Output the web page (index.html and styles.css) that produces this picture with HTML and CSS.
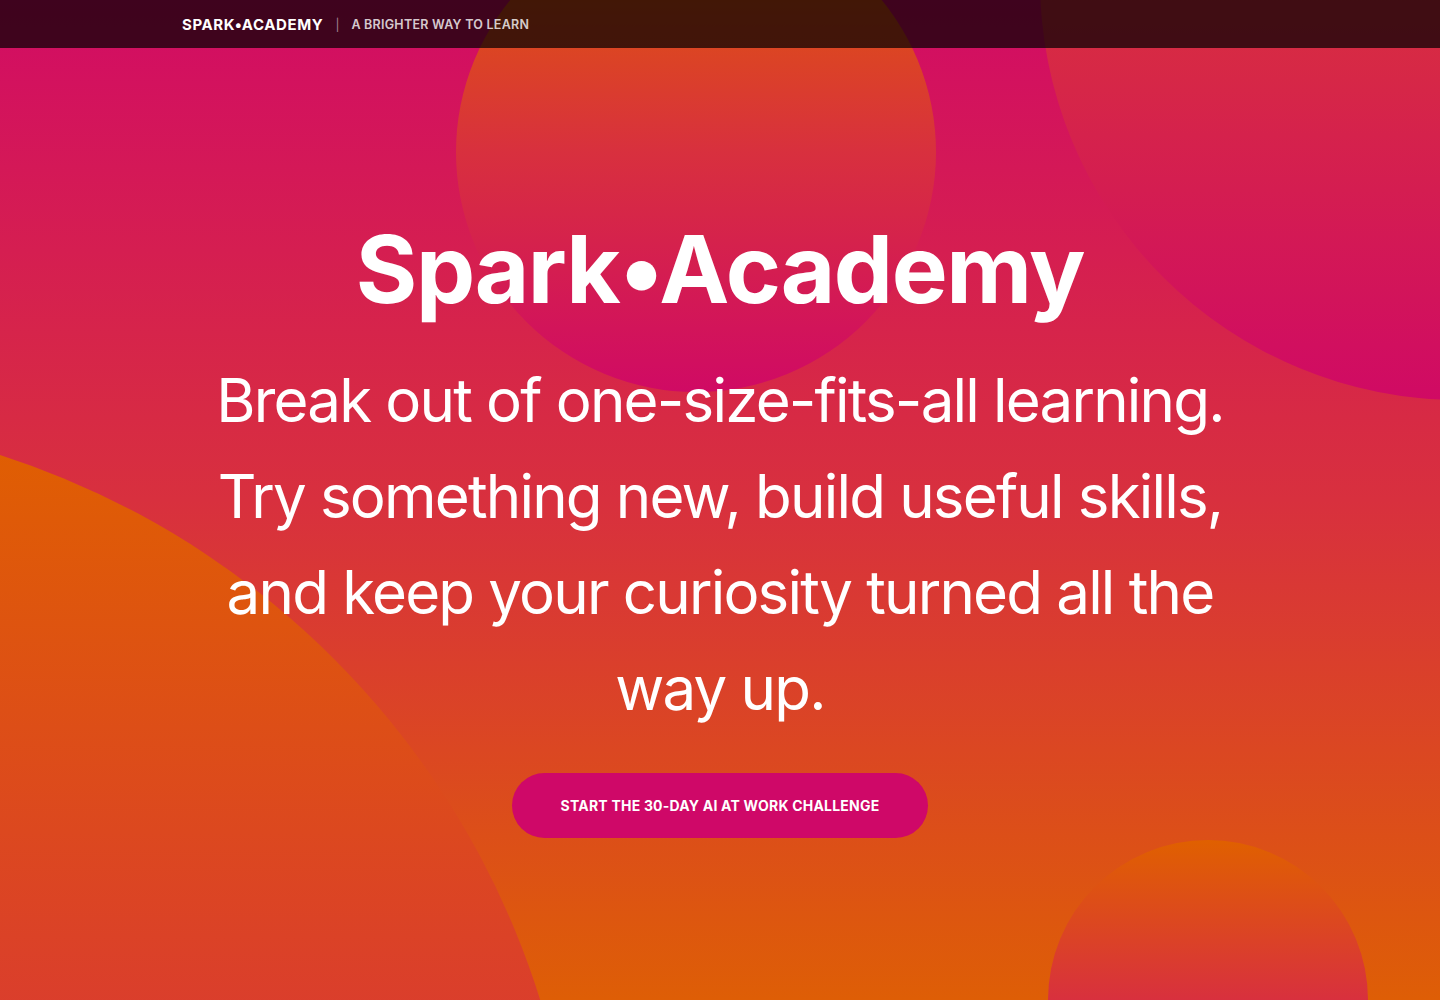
FILE: index.html
```html
<!DOCTYPE html>
<html lang="en">
<head>
<meta charset="utf-8">
<title>Spark•Academy</title>
<link rel="stylesheet" href="styles.css">
</head>
<body>
<div class="backdrop" aria-hidden="true">
  <span class="blob blob-top"></span>
  <span class="blob blob-right"></span>
  <span class="blob blob-left"></span>
  <span class="blob blob-small"></span>
</div>
<header class="topbar">
  <div class="topbar-inner">
    <span class="brand">SPARK•ACADEMY</span>
    <span class="sep">|</span>
    <span class="tagline">A BRIGHTER WAY TO LEARN</span>
  </div>
</header>
<main class="hero">
  <div class="hero-inner">
    <h1 class="title">Spark•Academy</h1>
    <p class="lead">Break out of one-size-fits-all learning. Try something new, build useful skills, and keep your curiosity turned all the way up.</p>
    <a class="cta" href="#">START THE 30-DAY AI AT WORK CHALLENGE</a>
  </div>
</main>
</body>
</html>
```

FILE: styles.css
```css
* { box-sizing: border-box; }
html, body { margin: 0; padding: 0; }
body {
  font-family: Inter, "Noto Sans", "Liberation Sans", sans-serif;
  color: #fff;
  min-height: 100vh;
  overflow: hidden;
  position: relative;
  background: linear-gradient(180deg, #d20c64 0%, #d8303e 50%, #de5e06 100%);
}

.backdrop {
  position: absolute;
  inset: 0;
  overflow: hidden;
  z-index: 0;
}
.blob {
  position: absolute;
  border-radius: 50%;
  background: linear-gradient(180deg, #e06000 0%, #d8303e 50%, #d00a64 100%);
}
.blob-top { left: 456px; top: -88px; width: 480px; height: 480px; }
.blob-right { left: 1040px; top: -440px; width: 840px; height: 840px; }
.blob-left { left: -1088px; top: 415px; width: 1666px; height: 1666px; }
.blob-small { left: 1048px; top: 840px; width: 320px; height: 320px; }

.topbar {
  position: absolute;
  top: 0; left: 0; right: 0;
  height: 48px;
  background: rgba(0, 0, 0, 0.7);
  z-index: 2;
}
.topbar-inner {
  max-width: 1076px;
  height: 100%;
  margin: 0 auto;
  display: flex;
  align-items: center;
  gap: 12px;
}
.brand {
  font-size: 15px;
  font-weight: 700;
  letter-spacing: 0.04em;
}
.sep {
  font-size: 12px;
  color: rgba(255, 255, 255, 0.5);
}
.tagline {
  font-size: 12.5px;
  font-weight: 600;
  letter-spacing: 0.02em;
  color: rgba(255, 255, 255, 0.8);
}

.hero {
  position: relative;
  z-index: 1;
  height: 100vh;
  padding-top: 48px;
  display: flex;
  align-items: center;
  justify-content: center;
}
.hero-inner {
  max-width: 1076px;
  width: 100%;
  display: flex;
  flex-direction: column;
  align-items: center;
  text-align: center;
}
.title {
  margin: 0;
  font-size: 94px;
  line-height: 117px;
  font-weight: 700;
  letter-spacing: -0.015em;
}
.lead {
  margin: 24px 0 0;
  font-size: 60px;
  line-height: 96px;
  font-weight: 400;
  letter-spacing: -0.03em;
}
.cta {
  margin-top: 37px;
  width: 416px;
  height: 65px;
  border-radius: 33px;
  background: #cf0868;
  color: #fff;
  text-decoration: none;
  font-size: 14px;
  font-weight: 700;
  letter-spacing: 0.015em;
  display: flex;
  align-items: center;
  justify-content: center;
}
```
